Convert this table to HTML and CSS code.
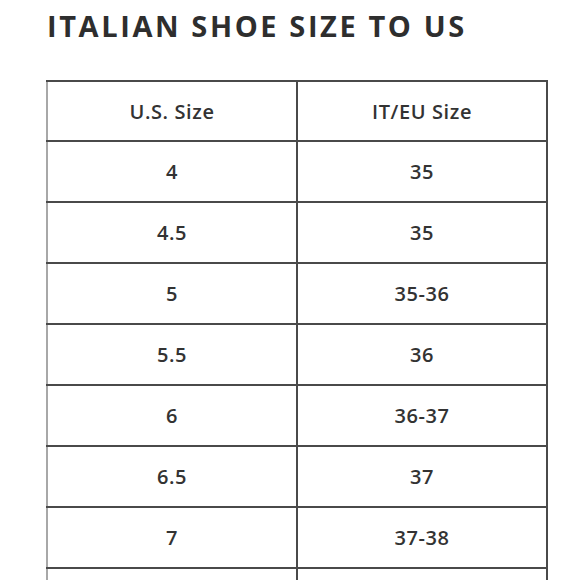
FILE: index.html
```html
<!DOCTYPE html>
<html>
<head>
<meta charset="utf-8">
<link rel="stylesheet" href="styles.css">
</head>
<body>
<div class="page">
  <h1 class="title">ITALIAN SHOE SIZE TO US</h1>
  <table class="sizes">
    <tr><th>U.S. Size</th><th>IT/EU Size</th></tr>
    <tr><td>4</td><td>35</td></tr>
    <tr><td>4.5</td><td>35</td></tr>
    <tr><td>5</td><td>35-36</td></tr>
    <tr><td>5.5</td><td>36</td></tr>
    <tr><td>6</td><td>36-37</td></tr>
    <tr><td>6.5</td><td>37</td></tr>
    <tr><td>7</td><td>37-38</td></tr>
    <tr><td></td><td></td></tr>
  </table>
</div>
</body>
</html>
```
FILE: styles.css
```css
html, body {
  margin: 0;
  padding: 0;
  background: #ffffff;
  overflow: hidden;
}
.page {
  padding: 8px 0 0 46px;
  font-family: "Open Sans", "Liberation Sans", sans-serif;
  color: #333333;
}
.title {
  margin: 0 0 36px 1px;
  font-size: 29px;
  font-weight: 700;
  letter-spacing: 2.6px;
  line-height: 36px;
  color: #2e2e2e;
}
.sizes {
  border-collapse: collapse;
  width: 502px;
  table-layout: fixed;
}
.sizes th,
.sizes td {
  height: 59px;
  padding: 0;
  border: 2px solid #4a4a4a;
  text-align: center;
  vertical-align: middle;
  font-size: 20px;
  font-weight: 600;
  letter-spacing: 0.6px;
  color: #333333;
}
.sizes th {
  height: 58px;
}
.sizes tr > :first-child {
  border-left-color: #a8a8a8;
}
```
